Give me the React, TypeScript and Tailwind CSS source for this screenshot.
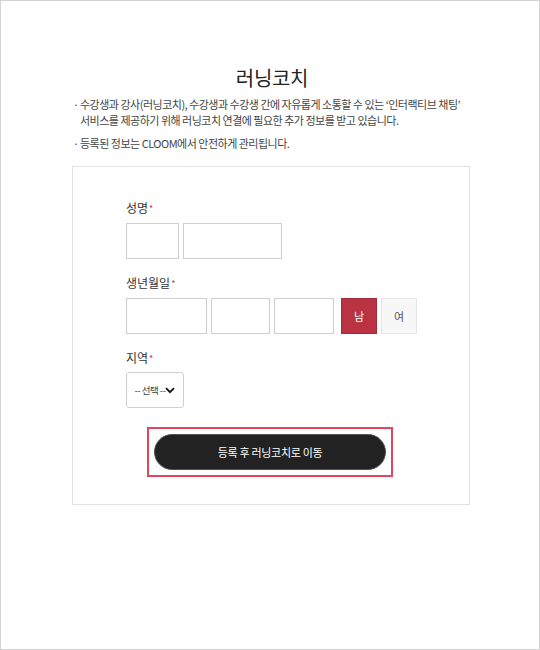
import React from "react";

const font = { fontFamily: '"Noto Sans CJK KR", "Noto Sans", sans-serif' };

function Label({ text }: { text: string }) {
  return (
    <div className="flex items-center h-[16px] text-[12px] leading-[16px] text-[#333]">
      <span>{text}</span>
      <span className="text-[#c0384a] text-[9px] ml-[1px] mt-[2px]">*</span>
    </div>
  );
}

function Box({ w }: { w: number }) {
  return <div className="h-[36px] border border-[#cfcfcf] bg-white" style={{ width: w }} />;
}

export default function App() {
  return (
    <div className="w-[540px] h-[650px] border border-[#d3d3d3] bg-white box-border" style={font}>
      <div className="pt-[63px] pl-[71px] w-[470px]">
        <h1 className="text-center text-[20px] leading-[28px] text-[#222] font-normal tracking-[-0.3px] pl-[1px]">
          러닝코치
        </h1>
        <div className="mt-[4px] text-[11px] leading-[16px] text-[#444] tracking-[-0.5px]">
          <div className="flex">
            <span className="w-[8px] shrink-0 pl-[1px]">·</span>
            <span>
              수강생과 강사(러닝코치), 수강생과 수강생 간에 자유롭게 소통할 수 있는 ‘인터랙티브 채팅’
              <br />
              서비스를 제공하기 위해 러닝코치 연결에 필요한 추가 정보를 받고 있습니다.
            </span>
          </div>
          <div className="flex mt-[7px]">
            <span className="w-[8px] shrink-0 pl-[1px]">·</span>
            <span>등록된 정보는 CLOOM에서 안전하게 관리됩니다.</span>
          </div>
        </div>
        <div className="mt-[15px] w-[398px] h-[339px] border border-[#e2e2e2] pt-[33px] pl-[53px] box-border">
          <Label text="성명" />
          <div className="flex gap-[4px] mt-[7px]">
            <Box w={53} />
            <Box w={99} />
          </div>
          <div className="mt-[16px]">
            <Label text="생년월일" />
          </div>
          <div className="flex mt-[7px]">
            <Box w={81} />
            <div className="w-[4px]" />
            <Box w={59} />
            <div className="w-[4px]" />
            <Box w={60} />
            <div className="w-[7px]" />
            <div className="w-[36px] h-[36px] bg-[#b93343] border border-[#a82a3a] flex items-center justify-center text-white text-[11px]">
              남
            </div>
            <div className="w-[4px]" />
            <div className="w-[36px] h-[36px] bg-[#f7f7f7] border border-[#e6e6e6] flex items-center justify-center text-[#555] text-[11px]">
              여
            </div>
          </div>
          <div className="mt-[16px]">
            <Label text="지역" />
          </div>
          <div className="mt-[6px] w-[58px] h-[36px] border border-[#cfcfcf] rounded-[3px] flex items-center justify-center text-[9.5px] text-[#444] tracking-[-0.5px]">
            <span>-- 선택 --</span>
            <svg width="10" height="7" viewBox="0 0 10 7" className="ml-[0px]">
              <path d="M1 1.2 L5 5.2 L9 1.2" fill="none" stroke="#111" strokeWidth="1.8" />
            </svg>
          </div>
          <div className="mt-[19px] -ml-[53px] flex justify-center pr-[2px]">
            <div className="border-2 border-[#e2455c] p-[5px]">
              <div className="w-[232px] h-[36px] rounded-full bg-[#222] border border-[#555] flex items-center justify-center text-white text-[11px] tracking-[-0.3px]">
                등록 후 러닝코치로 이동
              </div>
            </div>
          </div>
        </div>
      </div>
    </div>
  );
}
